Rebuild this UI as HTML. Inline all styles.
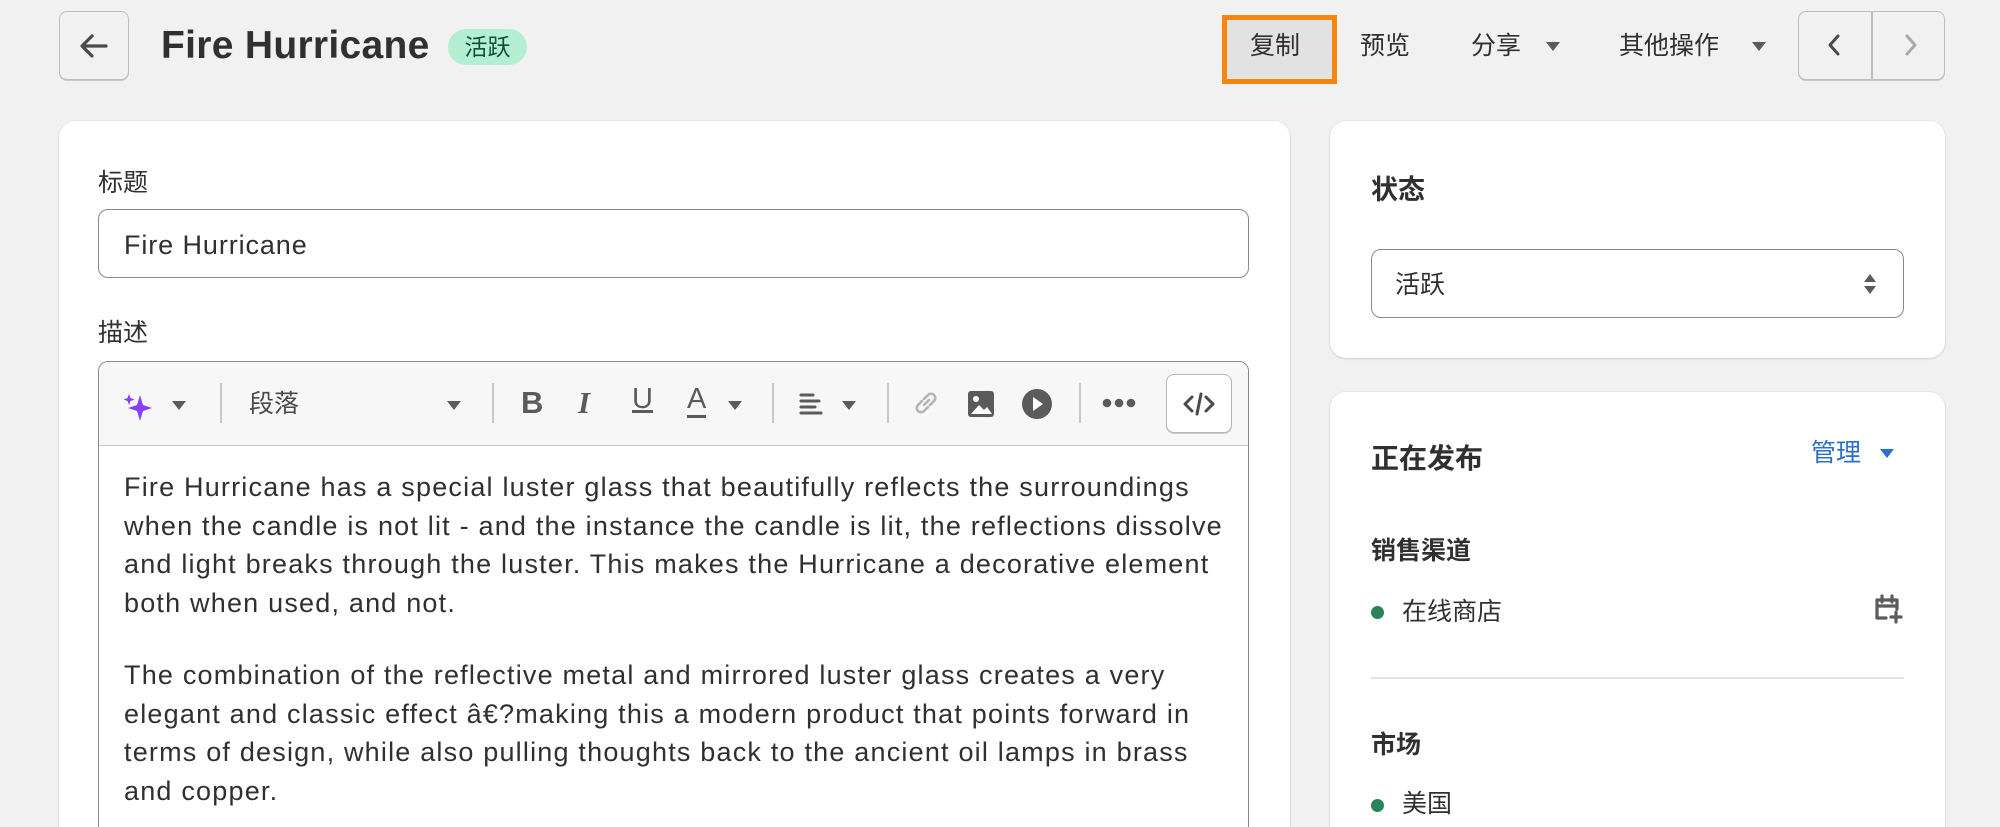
<!DOCTYPE html>
<html><head><meta charset="utf-8"><style>
*{box-sizing:border-box;margin:0;padding:0}
html,body{width:2000px;height:827px;overflow:hidden}
body{background:#f1f1f1;font-family:"Liberation Sans","Noto Sans CJK SC",sans-serif;color:#303030;position:relative}
.a{position:absolute;white-space:nowrap}
.card{position:absolute;background:#fff;border-radius:16px;box-shadow:0 1px 2px rgba(0,0,0,.12),0 0 0 1px rgba(0,0,0,.03)}
.btn{position:absolute;border:1.5px solid #bdbdbd;border-radius:8px;background:#f1f1f1;box-shadow:0 1px 0 #c8c8c8}
.t{font-size:25px;line-height:30px}
.caret{display:inline-block;width:0;height:0;border-left:7px solid transparent;border-right:7px solid transparent;border-top:9px solid #5b5b5b}
.div{position:absolute;width:1.5px;background:#c9c9c9;top:383px;height:40px}
.ic{position:absolute;top:385px}
.dot{position:absolute;width:13px;height:13px;border-radius:50%;background:#29845a}
</style></head><body>
<div class="btn" style="left:59px;top:11px;width:70px;height:69px"></div>
<svg class="a" style="left:76px;top:28px" width="36" height="36" viewBox="0 0 36 36"><path d="M30 18H7M16 8L6 18l10 10" fill="none" stroke="#4a4a4a" stroke-width="3.2" stroke-linecap="round" stroke-linejoin="round"/></svg>
<div class="a" style="left:161px;top:24px;font-size:39px;font-weight:700;color:#303030;letter-spacing:0.3px">Fire Hurricane</div>
<div class="a" style="left:448px;top:29px;width:79px;height:36px;background:#b4efd4;border-radius:18px;font-size:23px;line-height:36px;text-align:center;color:#0c5132">活跃</div>
<div class="a" style="left:1222px;top:15px;width:115px;height:69px;border:5px solid #f7860f;background:#e2e2e2"></div>
<div class="a t" style="left:1250px;top:31px">复制</div>
<div class="a t" style="left:1360px;top:31px">预览</div>
<div class="a t" style="left:1471px;top:31px">分享</div><span class="a caret" style="left:1546px;top:42px"></span>
<div class="a t" style="left:1619px;top:31px">其他操作</div><span class="a caret" style="left:1752px;top:42px"></span>
<div class="btn" style="left:1798px;top:11px;width:147px;height:69px"></div>
<div class="a" style="left:1871px;top:12px;width:1.5px;height:67px;background:#bdbdbd"></div>
<svg class="a" style="left:1822px;top:32px" width="26" height="26" viewBox="0 0 26 26"><path d="M16 4L8 13l8 9" fill="none" stroke="#4a4a4a" stroke-width="3" stroke-linecap="round" stroke-linejoin="round"/></svg>
<svg class="a" style="left:1897px;top:32px" width="26" height="26" viewBox="0 0 26 26"><path d="M10 4l8 9-8 9" fill="none" stroke="#aaa" stroke-width="3" stroke-linecap="round" stroke-linejoin="round"/></svg>

<div class="card" style="left:59px;top:121px;width:1231px;height:720px"></div>
<div class="a t" style="left:98px;top:168px">标题</div>
<div class="a" style="left:98px;top:209px;width:1151px;height:69px;border:1.5px solid #8a8a8a;border-radius:10px;background:#fff"></div>
<div class="a" style="left:124px;top:229px;font-size:27px;letter-spacing:0.9px;line-height:32px">Fire Hurricane</div>
<div class="a t" style="left:98px;top:318px">描述</div>
<div class="a" style="left:98px;top:361px;width:1151px;height:480px;border:1.5px solid #8a8a8a;border-radius:10px;background:#fff;overflow:hidden"><div style="height:84px;background:#f7f7f7;border-bottom:1.5px solid #c9c9c9"></div></div>
<svg class="ic" style="left:120px;top:387px" width="40" height="40" viewBox="0 0 40 40"><path d="M20 8l3 10 9 3-9 3-3 10-3-10-9-3 9-3z" fill="#8a3ffc"/><path d="M9 7l1.5 4 4 1.5-4 1.5L9 18l-1.5-4-4-1.5 4-1.5z" fill="#8a3ffc"/></svg>
<span class="a caret" style="left:172px;top:401px"></span>
<div class="div" style="left:220px"></div>
<div class="a t" style="left:249px;top:389px;color:#4a4a4a">段落</div>
<span class="a caret" style="left:447px;top:401px"></span>
<div class="div" style="left:492px"></div>
<div class="a" style="left:521px;top:385px;font-size:31px;font-weight:700;color:#5b5b5b">B</div>
<div class="a" style="left:578px;top:385px;font-size:31px;color:#5b5b5b;font-family:'Liberation Serif',serif;font-style:italic;font-weight:700">I</div>
<div class="a" style="left:632px;top:383px;font-size:29px;color:#5b5b5b;text-decoration:underline;text-decoration-thickness:3px">U</div>
<div class="a" style="left:687px;top:383px;font-size:29px;color:#5b5b5b;border-bottom:3px solid #5b5b5b;line-height:32px">A</div>
<span class="a caret" style="left:728px;top:401px"></span>
<div class="div" style="left:772px"></div>
<svg class="ic" style="left:797px;top:390px" width="28" height="28" viewBox="0 0 28 28"><path d="M4 5h12M4 11h18M4 17h14M4 23h20" stroke="#5b5b5b" stroke-width="3" stroke-linecap="round"/></svg>
<span class="a caret" style="left:842px;top:401px"></span>
<div class="div" style="left:887px"></div>
<svg class="ic" style="left:911px;top:388px" width="30" height="30" viewBox="0 0 30 30"><path d="M13 17l5-5M11 13l-4 4a4 4 0 006 6l4-4M19 17l4-4a4 4 0 00-6-6l-4 4" fill="none" stroke="#b5b5b5" stroke-width="2.6" stroke-linecap="round"/></svg>
<svg class="ic" style="left:966px;top:389px" width="30" height="30" viewBox="0 0 30 30"><rect x="2" y="2" width="26" height="26" rx="3" fill="#5b5b5b"/><circle cx="10" cy="10" r="3" fill="#fff"/><path d="M5 25l8-9 5 5 3-3 5 7z" fill="#fff"/></svg>
<svg class="ic" style="left:1021px;top:388px" width="32" height="32" viewBox="0 0 32 32"><circle cx="16" cy="16" r="15" fill="#5b5b5b"/><path d="M12 9l10 7-10 7z" fill="#fff"/></svg>
<div class="div" style="left:1079px"></div>
<svg class="ic" style="left:1102px;top:396px" width="34" height="14" viewBox="0 0 34 14"><circle cx="5" cy="7" r="4.3" fill="#5b5b5b"/><circle cx="17" cy="7" r="4.3" fill="#5b5b5b"/><circle cx="29" cy="7" r="4.3" fill="#5b5b5b"/></svg>
<div class="a" style="left:1166px;top:374px;width:66px;height:59px;border:1.5px solid #b5b5b5;border-radius:8px;background:#fff;box-shadow:0 1px 0 #ccc"></div>
<svg class="a" style="left:1182px;top:389px" width="34" height="30" viewBox="0 0 34 30"><path d="M10 8l-7 7 7 7M24 8l7 7-7 7M19 5l-4 20" fill="none" stroke="#4a4a4a" stroke-width="3" stroke-linecap="round" stroke-linejoin="round"/></svg>
<div class="a" style="left:124px;top:468px;font-size:27px;letter-spacing:1.2px;line-height:38.5px">
Fire Hurricane has a special luster glass that beautifully reflects the surroundings<br>when the candle is not lit - and the instance the candle is lit, the reflections dissolve<br>and light breaks through the luster. This makes the Hurricane a decorative element<br>both when used, and not.
<div style="height:34px"></div>
The combination of the reflective metal and mirrored luster glass creates a very<br>elegant and classic effect â€?making this a modern product that points forward in<br>terms of design, while also pulling thoughts back to the ancient oil lamps in brass<br>and copper.</div>

<div class="card" style="left:1330px;top:121px;width:615px;height:237px"></div>
<div class="a" style="left:1371px;top:168px;font-size:27px;font-weight:700">状态</div>
<div class="a" style="left:1371px;top:249px;width:533px;height:69px;border:1.5px solid #8a8a8a;border-radius:10px;background:#fff"></div>
<div class="a t" style="left:1395px;top:270px">活跃</div>
<svg class="a" style="left:1862px;top:272px" width="16" height="24" viewBox="0 0 16 24"><path d="M8 2l6 8H2zM8 22l6-8H2z" fill="#5b5b5b"/></svg>

<div class="card" style="left:1330px;top:392px;width:615px;height:460px"></div>
<div class="a" style="left:1371px;top:437px;font-size:28px;font-weight:700">正在发布</div>
<div class="a t" style="left:1811px;top:438px;color:#2c6ecb">管理</div><span class="a caret" style="left:1880px;top:449px;border-top-color:#2c6ecb"></span>
<div class="a" style="left:1371px;top:531px;font-size:25px;font-weight:700">销售渠道</div>
<div class="dot" style="left:1371px;top:606px"></div>
<div class="a t" style="left:1402px;top:597px">在线商店</div>
<svg class="a" style="left:1871px;top:592px" width="34" height="34" viewBox="0 0 34 34"><path d="M15 26H6V8h20v9M6 14h20M11 4v6M21 4v6M25 20v10M20 25h10" fill="none" stroke="#5b5b5b" stroke-width="3.2" stroke-linecap="round" stroke-linejoin="round"/></svg>
<div class="a" style="left:1371px;top:677px;width:533px;height:1.5px;background:#e3e3e3"></div>
<div class="a" style="left:1371px;top:725px;font-size:25px;font-weight:700">市场</div>
<div class="dot" style="left:1371px;top:799px"></div>
<div class="a t" style="left:1402px;top:789px">美国</div>
</body></html>
